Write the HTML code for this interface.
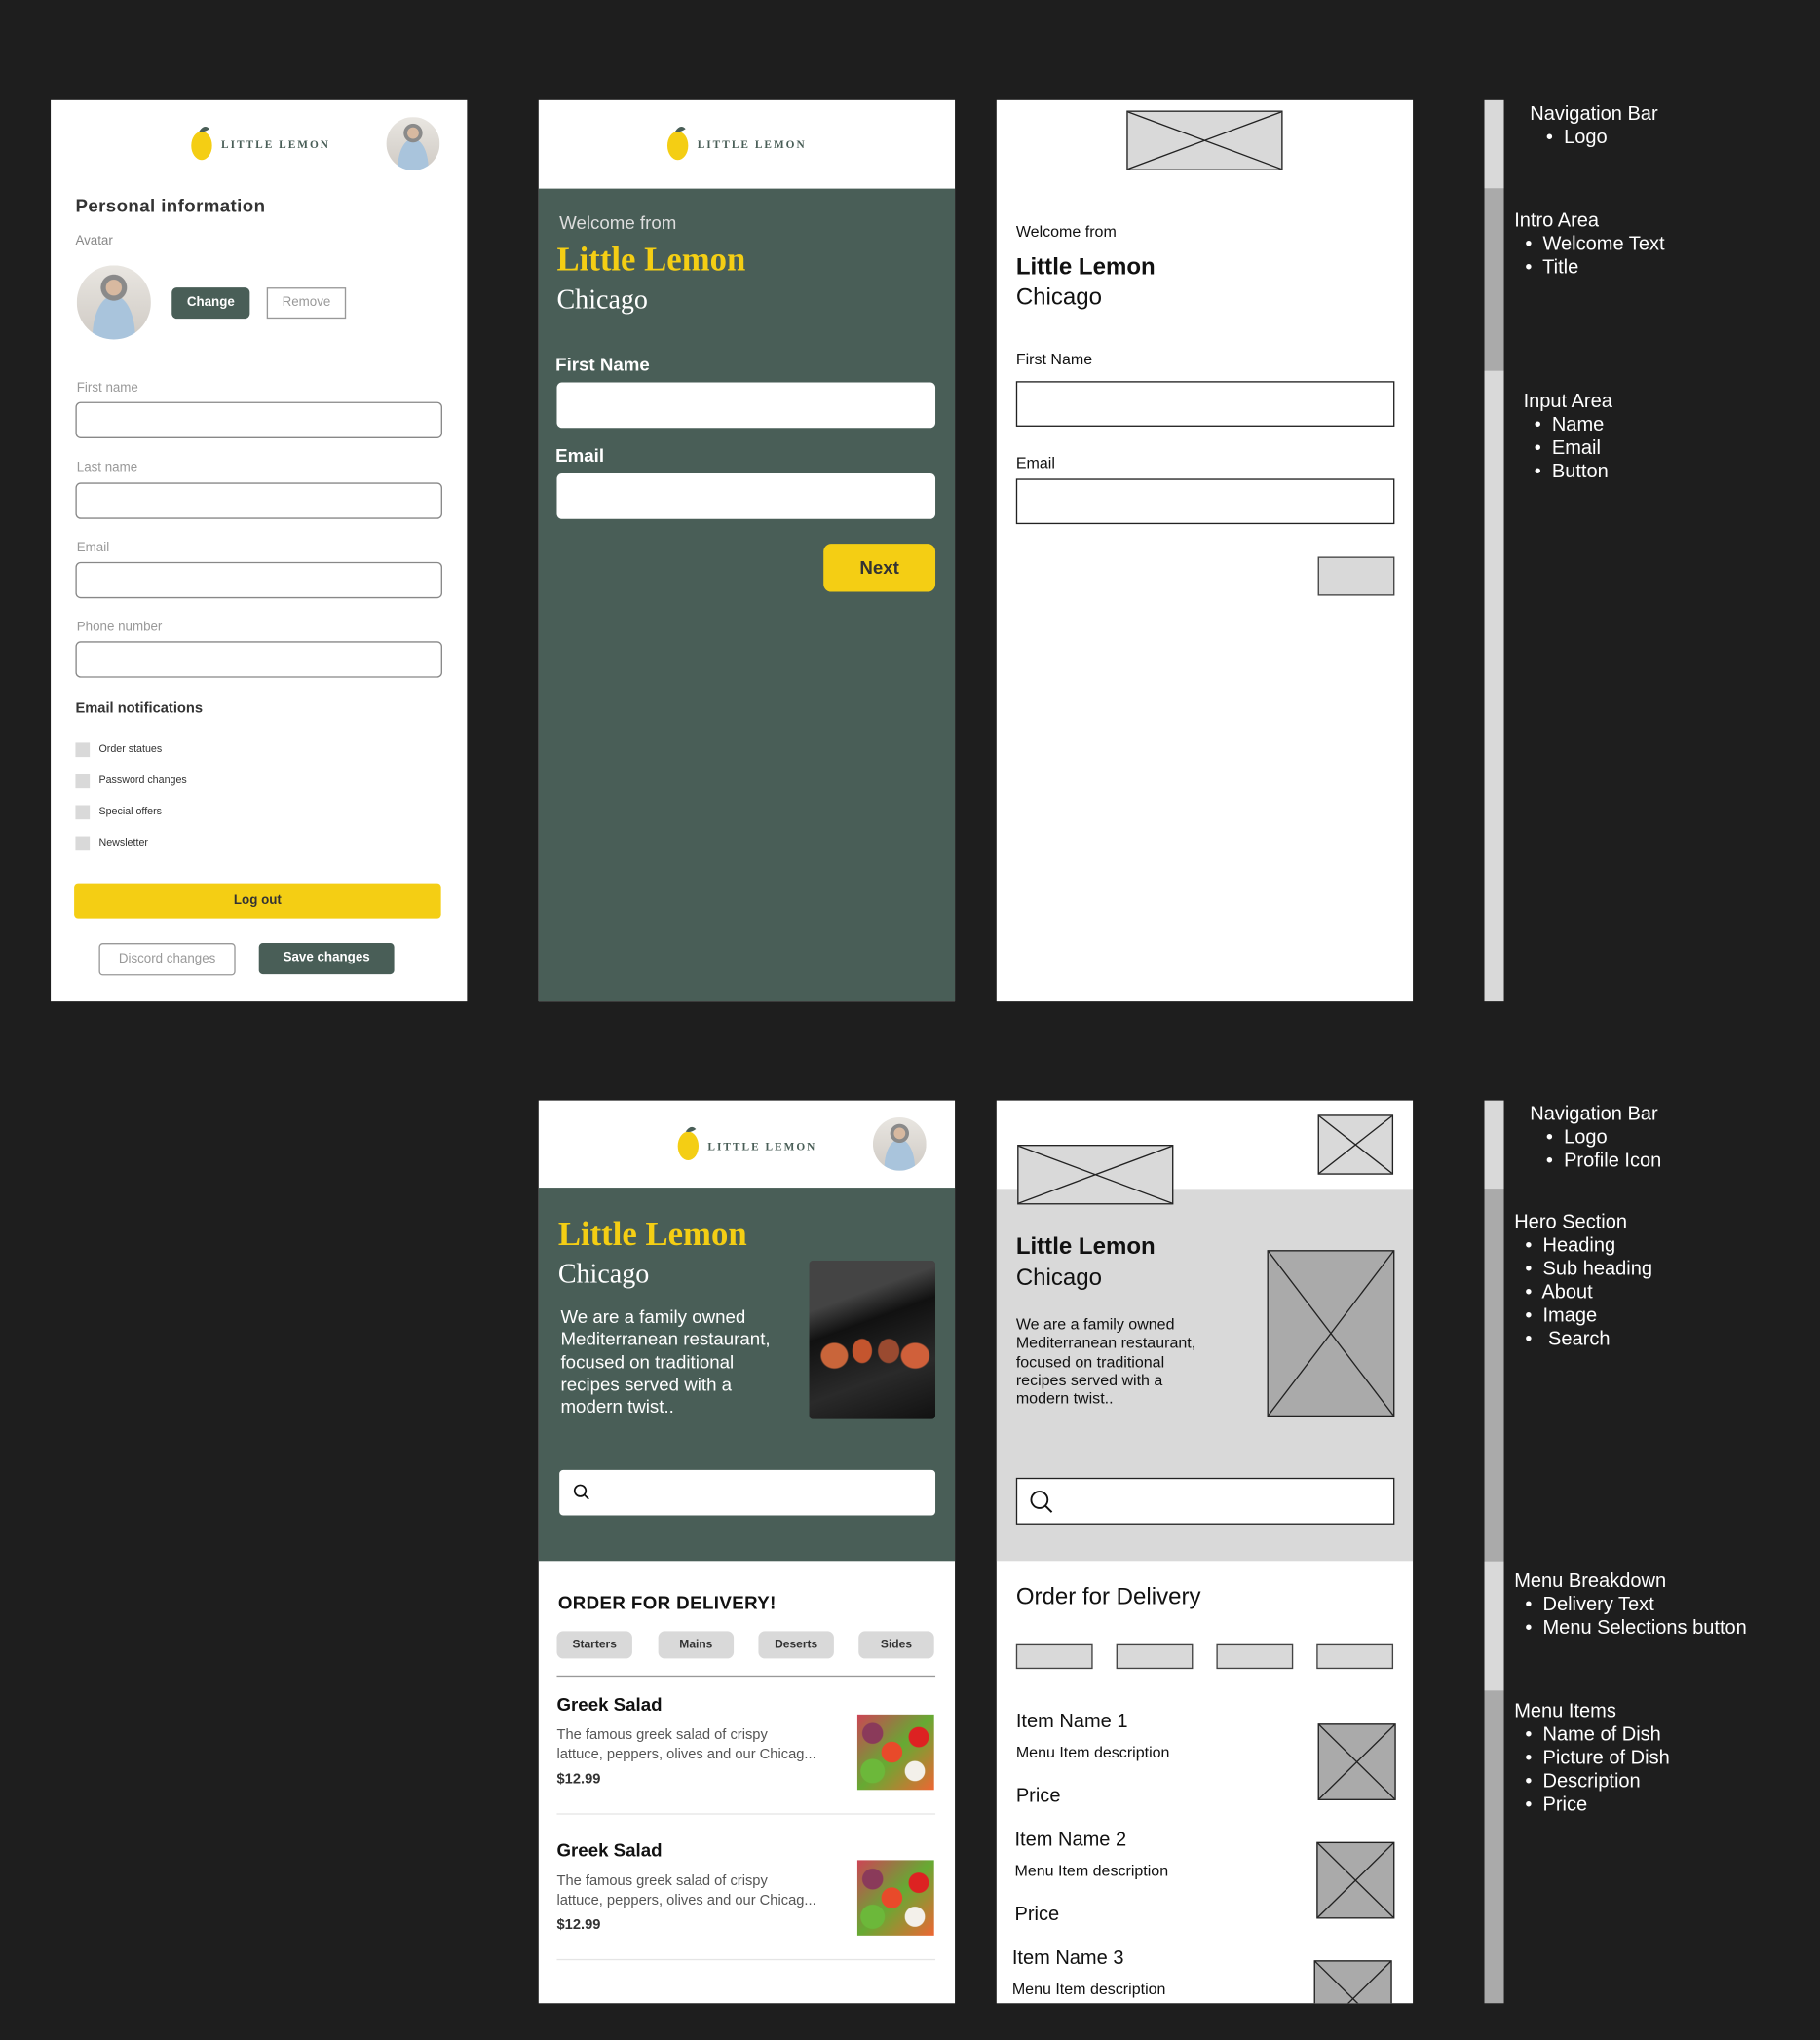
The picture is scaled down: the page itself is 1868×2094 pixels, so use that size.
<!DOCTYPE html>
<html><head><meta charset="utf-8"><style>
*{margin:0;padding:0;box-sizing:border-box}
html,body{width:1868px;height:2094px;overflow:hidden;background:#1e1e1e}
#s{position:absolute;left:0;top:0;width:1399px;height:1568px;transform:scale(1.33524);transform-origin:0 0;font-family:"Liberation Sans",sans-serif}
.a{position:absolute}
.f{position:absolute;background:#fff;overflow:hidden}
.t{position:absolute;white-space:nowrap}
.serif{font-family:"Liberation Serif",serif}
.logo{font-size:8.5px;letter-spacing:1.5px;font-weight:bold;color:#495e57}
.in{position:absolute;border:1px solid #888;border-radius:4px;background:#fff}
.ph{position:absolute;background:#d9d9d9;border:1px solid #222}
.ph svg{position:absolute;left:0;top:0;width:100%;height:100%}
.wi{position:absolute;border:1px solid #222;background:#fff}
.lbl{color:#fff;font-size:15px;line-height:18px}
.cb{position:absolute;width:11px;height:11px;background:#d9d9d9}
.av{position:absolute;border-radius:50%;background:radial-gradient(circle at 50% 30%,#d8b9a0 0 12%,#8a8a8a 13% 20%,transparent 21%),radial-gradient(ellipse at 50% 95%,#a9c4dc 0 40%,transparent 41%),linear-gradient(#e9e6e1,#cfcac4)}
.sal{position:absolute;background:radial-gradient(circle at 45% 50%,#e84a2a 0 18%,transparent 19%),radial-gradient(circle at 80% 30%,#d22 0 12%,transparent 13%),radial-gradient(circle at 20% 75%,#6cb83a 0 14%,transparent 15%),radial-gradient(circle at 75% 75%,#f3f0ea 0 12%,transparent 13%),radial-gradient(circle at 20% 25%,#8a3a5a 0 12%,transparent 13%),linear-gradient(135deg,#c45 ,#6a3 50%,#e63)}
.pill{position:absolute;top:1255px;width:58px;height:21px;background:#d9d9d9;border-radius:5px;font-size:9px;font-weight:bold;color:#333;text-align:center;line-height:21px}
</style></head><body><div id="s">

<!-- FRAME 1 -->
<div class="f" style="left:39px;top:77px;width:320px;height:693px">
  <svg class="a" style="left:106px;top:18px" width="20" height="30" viewBox="0 0 20 30"><ellipse cx="10" cy="17" rx="8" ry="11" fill="#f4ce14"/><path d="M8 6 Q12 0 16 4 Q12 7 8 6Z" fill="#495e57"/></svg>
  <div class="t serif logo" style="left:131px;top:29px">LITTLE LEMON</div>
  <div class="av" style="left:258px;top:13px;width:41px;height:41px"></div>
  <div class="t" style="left:19px;top:73px;font-size:14px;font-weight:bold;color:#333;letter-spacing:.3px">Personal information</div>
  <div class="t" style="left:19px;top:103px;font-size:10px;color:#888">Avatar</div>
  <div class="av" style="left:20px;top:127px;width:57px;height:57px"></div>
  <div class="a" style="left:93px;top:144px;width:60px;height:24px;background:#495e57;border-radius:4px;color:#fff;font-size:10px;font-weight:bold;text-align:center;line-height:24px">Change</div>
  <div class="a" style="left:166px;top:144px;width:61px;height:24px;border:1px solid #999;color:#999;font-size:10px;text-align:center;line-height:22px">Remove</div>
  <div class="t" style="left:20px;top:216px;font-size:10px;color:#999">First name</div>
  <div class="in" style="left:19px;top:232px;width:282px;height:28px"></div>
  <div class="t" style="left:20px;top:277px;font-size:10px;color:#999">Last name</div>
  <div class="in" style="left:19px;top:294px;width:282px;height:28px"></div>
  <div class="t" style="left:20px;top:339px;font-size:10px;color:#999">Email</div>
  <div class="in" style="left:19px;top:355px;width:282px;height:28px"></div>
  <div class="t" style="left:20px;top:400px;font-size:10px;color:#999">Phone number</div>
  <div class="in" style="left:19px;top:416px;width:282px;height:28px"></div>
  <div class="t" style="left:19px;top:462px;font-size:11px;font-weight:bold;color:#333">Email notifications</div>
  <div class="cb" style="left:19px;top:494px"></div><div class="t" style="left:37px;top:494px;font-size:8px;color:#333">Order statues</div>
  <div class="cb" style="left:19px;top:518px"></div><div class="t" style="left:37px;top:518px;font-size:8px;color:#333">Password changes</div>
  <div class="cb" style="left:19px;top:542px"></div><div class="t" style="left:37px;top:542px;font-size:8px;color:#333">Special offers</div>
  <div class="cb" style="left:19px;top:566px"></div><div class="t" style="left:37px;top:566px;font-size:8px;color:#333">Newsletter</div>
  <div class="a" style="left:18px;top:602px;width:282px;height:27px;background:#f4ce14;border-radius:3px;font-size:10px;font-weight:bold;color:#333;text-align:center;line-height:27px">Log out</div>
  <div class="a" style="left:37px;top:648px;width:105px;height:25px;border:1px solid #999;border-radius:3px;font-size:10px;color:#999;text-align:center;line-height:23px">Discord changes</div>
  <div class="a" style="left:160px;top:648px;width:104px;height:24px;background:#495e57;border-radius:3px;font-size:10px;font-weight:bold;color:#fff;text-align:center;line-height:24px">Save changes</div>
</div>

<!-- FRAME 2 -->
<div class="f" style="left:414px;top:77px;width:320px;height:693px">
  <svg class="a" style="left:97px;top:18px" width="20" height="30" viewBox="0 0 20 30"><ellipse cx="10" cy="17" rx="8" ry="11" fill="#f4ce14"/><path d="M8 6 Q12 0 16 4 Q12 7 8 6Z" fill="#495e57"/></svg>
  <div class="t serif logo" style="left:122px;top:29px">LITTLE LEMON</div>
  <div class="a" style="left:0;top:68px;width:320px;height:625px;background:#495e57"></div>
  <div class="t" style="left:16px;top:86px;font-size:14px;color:#ddd">Welcome from</div>
  <div class="t serif" style="left:14px;top:108px;font-size:26px;font-weight:bold;color:#f4ce14">Little Lemon</div>
  <div class="t serif" style="left:14px;top:141px;font-size:21px;color:#fff">Chicago</div>
  <div class="t" style="left:13px;top:195px;font-size:14px;font-weight:bold;color:#fff">First Name</div>
  <div class="a" style="left:14px;top:217px;width:291px;height:35px;background:#fff;border-radius:4px"></div>
  <div class="t" style="left:13px;top:265px;font-size:14px;font-weight:bold;color:#fff">Email</div>
  <div class="a" style="left:14px;top:287px;width:291px;height:35px;background:#fff;border-radius:4px"></div>
  <div class="a" style="left:219px;top:341px;width:86px;height:37px;background:#f4ce14;border-radius:6px;font-size:14px;font-weight:bold;color:#333;text-align:center;line-height:37px">Next</div>
</div>

<!-- FRAME 3 -->
<div class="f" style="left:766px;top:77px;width:320px;height:693px">
  <div class="ph" style="left:100px;top:8px;width:120px;height:46px"><svg viewBox="0 0 100 100" preserveAspectRatio="none"><path d="M0 0L100 100M100 0L0 100" stroke="#222" stroke-width="1" vector-effect="non-scaling-stroke"/></svg></div>
  <div class="t" style="left:15px;top:94px;font-size:12px;color:#111">Welcome from</div>
  <div class="t" style="left:15px;top:118px;font-size:18px;font-weight:bold;color:#111">Little Lemon</div>
  <div class="t" style="left:15px;top:141px;font-size:18px;color:#111">Chicago</div>
  <div class="t" style="left:15px;top:192px;font-size:12px;color:#111">First Name</div>
  <div class="wi" style="left:15px;top:216px;width:291px;height:35px"></div>
  <div class="t" style="left:15px;top:272px;font-size:12px;color:#111">Email</div>
  <div class="wi" style="left:15px;top:291px;width:291px;height:35px"></div>
  <div class="a" style="left:247px;top:351px;width:59px;height:30px;background:#d9d9d9;border:1px solid #444"></div>
</div>

<!-- bars top -->
<div class="a" style="left:1141px;top:77px;width:15px;height:68px;background:#d9d9d9"></div>
<div class="a" style="left:1141px;top:145px;width:15px;height:140px;background:#aaa"></div>
<div class="a" style="left:1141px;top:285px;width:15px;height:485px;background:#d9d9d9"></div>
<div class="t lbl" style="left:1176px;top:79px">Navigation Bar<br>&nbsp;&nbsp;&nbsp;•&nbsp; Logo</div>
<div class="t lbl" style="left:1164px;top:161px">Intro Area<br>&nbsp;&nbsp;•&nbsp; Welcome Text<br>&nbsp;&nbsp;•&nbsp; Title</div>
<div class="t lbl" style="left:1171px;top:300px">Input Area<br>&nbsp;&nbsp;•&nbsp; Name<br>&nbsp;&nbsp;•&nbsp; Email<br>&nbsp;&nbsp;•&nbsp; Button</div>

<!-- FRAME 4 -->
<div class="f" style="left:414px;top:846px;width:320px;height:694px">
  <svg class="a" style="left:105px;top:18px" width="20" height="30" viewBox="0 0 20 30"><ellipse cx="10" cy="17" rx="8" ry="11" fill="#f4ce14"/><path d="M8 6 Q12 0 16 4 Q12 7 8 6Z" fill="#495e57"/></svg>
  <div class="t serif logo" style="left:130px;top:30px">LITTLE LEMON</div>
  <div class="av" style="left:257px;top:13px;width:41px;height:41px"></div>
  <div class="a" style="left:0;top:67px;width:320px;height:287px;background:#495e57"></div>
  <div class="t serif" style="left:15px;top:88px;font-size:26px;font-weight:bold;color:#f4ce14">Little Lemon</div>
  <div class="t serif" style="left:15px;top:121px;font-size:21px;color:#fff">Chicago</div>
  <div class="t" style="left:17px;top:158px;font-size:14px;line-height:17.3px;color:#fff">We are a family owned<br>Mediterranean restaurant,<br>focused on traditional<br>recipes served with a<br>modern twist..</div>
  <div class="a" style="left:208px;top:123px;width:97px;height:122px;border-radius:3px;background:radial-gradient(ellipse at 20% 60%,#c9653a 0 9%,transparent 10%),radial-gradient(ellipse at 42% 57%,#c4552e 0 9%,transparent 10%),radial-gradient(ellipse at 63% 57%,#9a4a30 0 9%,transparent 10%),radial-gradient(ellipse at 84% 60%,#d0603a 0 9%,transparent 10%),linear-gradient(160deg,#444 0 25%,#111 40%,#2a2a2a 70%,#111)"></div>
  <div class="a" style="left:16px;top:284px;width:289px;height:35px;background:#fff;border-radius:3px"></div>
  <svg class="a" style="left:26px;top:294px" width="14" height="14" viewBox="0 0 14 14"><circle cx="6" cy="6" r="4.3" fill="none" stroke="#111" stroke-width="1.3"/><path d="M9 9L12.5 12.5" stroke="#111" stroke-width="1.3"/></svg>
  <div class="t" style="left:15px;top:378px;font-size:14px;font-weight:bold;color:#111;letter-spacing:.3px">ORDER FOR DELIVERY!</div>
  <div class="pill" style="left:14px;top:408px">Starters</div>
  <div class="pill" style="left:92px;top:408px">Mains</div>
  <div class="pill" style="left:169px;top:408px">Deserts</div>
  <div class="pill" style="left:246px;top:408px">Sides</div>
  <div class="a" style="left:14px;top:442px;width:291px;height:1px;background:#999"></div>
  <div class="t" style="left:14px;top:456px;font-size:14px;font-weight:bold;color:#111">Greek Salad</div>
  <div class="t" style="left:14px;top:481px;font-size:11px;line-height:14.5px;color:#555">The famous greek salad of crispy<br>lattuce, peppers, olives and our Chicag...</div>
  <div class="t" style="left:14px;top:516px;font-size:11px;font-weight:bold;color:#333">$12.99</div>
  <div class="sal" style="left:245px;top:472px;width:59px;height:58px"></div>
  <div class="a" style="left:14px;top:548px;width:291px;height:1px;background:#e5e5e5"></div>
  <div class="t" style="left:14px;top:568px;font-size:14px;font-weight:bold;color:#111">Greek Salad</div>
  <div class="t" style="left:14px;top:593px;font-size:11px;line-height:14.5px;color:#555">The famous greek salad of crispy<br>lattuce, peppers, olives and our Chicag...</div>
  <div class="t" style="left:14px;top:628px;font-size:11px;font-weight:bold;color:#333">$12.99</div>
  <div class="sal" style="left:245px;top:584px;width:59px;height:58px"></div>
  <div class="a" style="left:14px;top:660px;width:291px;height:1px;background:#e5e5e5"></div>
</div>

<!-- FRAME 5 -->
<div class="f" style="left:766px;top:846px;width:320px;height:694px">
  <div class="ph" style="left:247px;top:11px;width:58px;height:46px"><svg viewBox="0 0 100 100" preserveAspectRatio="none"><path d="M0 0L100 100M100 0L0 100" stroke="#222" vector-effect="non-scaling-stroke"/></svg></div>
  <div class="a" style="left:0;top:68px;width:320px;height:286px;background:#d9d9d9"></div>
  <div class="ph" style="left:16px;top:34px;width:120px;height:46px"><svg viewBox="0 0 100 100" preserveAspectRatio="none"><path d="M0 0L100 100M100 0L0 100" stroke="#222" vector-effect="non-scaling-stroke"/></svg></div>
  <div class="t" style="left:15px;top:102px;font-size:18px;font-weight:bold;color:#111">Little Lemon</div>
  <div class="t" style="left:15px;top:126px;font-size:18px;color:#111">Chicago</div>
  <div class="t" style="left:15px;top:165px;font-size:12px;line-height:14.3px;color:#111">We are a family owned<br>Mediterranean restaurant,<br>focused on traditional<br>recipes served with a<br>modern twist..</div>
  <div class="ph" style="left:208px;top:115px;width:98px;height:128px;background:#aaa"><svg viewBox="0 0 100 100" preserveAspectRatio="none"><path d="M0 0L100 100M100 0L0 100" stroke="#222" vector-effect="non-scaling-stroke"/></svg></div>
  <div class="wi" style="left:15px;top:290px;width:291px;height:36px"></div>
  <svg class="a" style="left:25px;top:299px" width="20" height="20" viewBox="0 0 20 20"><circle cx="8" cy="8" r="6.3" fill="none" stroke="#111" stroke-width="1.4"/><path d="M12.5 12.5L17.5 17.5" stroke="#111" stroke-width="1.5"/></svg>
  <div class="t" style="left:15px;top:371px;font-size:18px;color:#111">Order for Delivery</div>
  <div class="a" style="left:15px;top:418px;width:59px;height:19px;background:#d9d9d9;border:1px solid #444"></div>
  <div class="a" style="left:92px;top:418px;width:59px;height:19px;background:#d9d9d9;border:1px solid #444"></div>
  <div class="a" style="left:169px;top:418px;width:59px;height:19px;background:#d9d9d9;border:1px solid #444"></div>
  <div class="a" style="left:246px;top:418px;width:59px;height:19px;background:#d9d9d9;border:1px solid #444"></div>
  <div class="t" style="left:15px;top:469px;font-size:15px;color:#111">Item Name 1</div>
  <div class="t" style="left:15px;top:494px;font-size:12px;color:#111">Menu Item description</div>
  <div class="t" style="left:15px;top:526px;font-size:15px;color:#111">Price</div>
  <div class="ph" style="left:247px;top:479px;width:60px;height:59px;background:#aaa"><svg viewBox="0 0 100 100" preserveAspectRatio="none"><path d="M0 0L100 100M100 0L0 100" stroke="#222" vector-effect="non-scaling-stroke"/></svg></div>
  <div class="t" style="left:14px;top:560px;font-size:15px;color:#111">Item Name 2</div>
  <div class="t" style="left:14px;top:585px;font-size:12px;color:#111">Menu Item description</div>
  <div class="t" style="left:14px;top:617px;font-size:15px;color:#111">Price</div>
  <div class="ph" style="left:246px;top:570px;width:60px;height:59px;background:#aaa"><svg viewBox="0 0 100 100" preserveAspectRatio="none"><path d="M0 0L100 100M100 0L0 100" stroke="#222" vector-effect="non-scaling-stroke"/></svg></div>
  <div class="t" style="left:12px;top:651px;font-size:15px;color:#111">Item Name 3</div>
  <div class="t" style="left:12px;top:676px;font-size:12px;color:#111">Menu Item description</div>
  <div class="ph" style="left:244px;top:661px;width:60px;height:59px;background:#aaa"><svg viewBox="0 0 100 100" preserveAspectRatio="none"><path d="M0 0L100 100M100 0L0 100" stroke="#222" vector-effect="non-scaling-stroke"/></svg></div>
</div>

<!-- bars bottom -->
<div class="a" style="left:1141px;top:846px;width:15px;height:68px;background:#d9d9d9"></div>
<div class="a" style="left:1141px;top:914px;width:15px;height:286px;background:#aaa"></div>
<div class="a" style="left:1141px;top:1200px;width:15px;height:100px;background:#d9d9d9"></div>
<div class="a" style="left:1141px;top:1300px;width:15px;height:240px;background:#aaa"></div>
<div class="t lbl" style="left:1176px;top:848px">Navigation Bar<br>&nbsp;&nbsp;&nbsp;•&nbsp; Logo<br>&nbsp;&nbsp;&nbsp;•&nbsp; Profile Icon</div>
<div class="t lbl" style="left:1164px;top:931px">Hero Section<br>&nbsp;&nbsp;•&nbsp; Heading<br>&nbsp;&nbsp;•&nbsp; Sub heading<br>&nbsp;&nbsp;•&nbsp; About<br>&nbsp;&nbsp;•&nbsp; Image<br>&nbsp;&nbsp;•&nbsp;&nbsp; Search</div>
<div class="t lbl" style="left:1164px;top:1207px">Menu Breakdown<br>&nbsp;&nbsp;•&nbsp; Delivery Text<br>&nbsp;&nbsp;•&nbsp; Menu Selections button</div>
<div class="t lbl" style="left:1164px;top:1307px">Menu Items<br>&nbsp;&nbsp;•&nbsp; Name of Dish<br>&nbsp;&nbsp;•&nbsp; Picture of Dish<br>&nbsp;&nbsp;•&nbsp; Description<br>&nbsp;&nbsp;•&nbsp; Price</div>

</div></body></html>
